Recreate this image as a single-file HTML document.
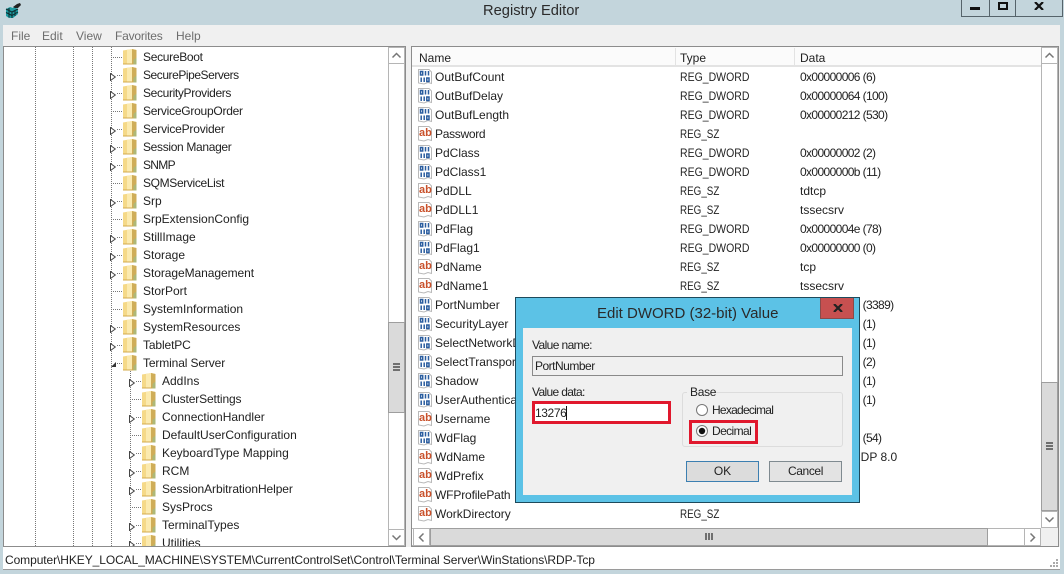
<!DOCTYPE html>
<html><head><meta charset="utf-8"><style>
html,body{margin:0;padding:0;width:1064px;height:574px;overflow:hidden;background:#c3d5dc}
body{position:relative;font:12px "Liberation Sans",sans-serif;color:#222}
.a{position:absolute;box-sizing:border-box}
.t{position:absolute;white-space:nowrap;line-height:16px}
#tree{left:4px;top:47px;width:384px;height:499px;overflow:hidden;background:#fff}
#tree .r{position:absolute;left:0;width:384px;height:18px;white-space:nowrap;line-height:18px}
.v{position:absolute;top:0;width:0;height:499px;border-left:1px dotted #777}
.r svg{position:absolute}
.r span{position:absolute;top:0}
.l1 svg.f{left:119px;top:1px}.l1 span{left:139px}.l1 svg.w{left:106px;top:7px}.l1 i{left:109px}
.l2 svg.f{left:138px;top:1px}.l2 span{left:158px}.l2 svg.w{left:125px;top:7px}.l2 i{left:128px}
.r i{position:absolute;top:9px;width:9px;height:0;border-top:1px dotted #777}
#list{left:412px;top:69px;width:629px;height:459px;overflow:hidden;background:#fff}
#list .r{position:absolute;left:0;width:629px;height:19px;line-height:19px;white-space:nowrap}
#list .r svg{left:5px;top:0}
#list .n{left:23px}#list .y{left:268px;transform:scaleX(.875);transform-origin:0 0}#list .z{left:268px;transform:scaleX(.82);transform-origin:0 0}#list .d{left:388px}#list .h{left:388px;letter-spacing:-.62px}
.sb{background:#fff;border-left:1px solid #b5b5b5;border-right:1px solid #b5b5b5}
.btn{position:absolute;background:#fff;border:1px solid #b5b5b5;box-sizing:border-box}
.thumb{position:absolute;background:#dadada;border:1px solid #9e9e9e;box-sizing:border-box}
.btnd{border:1px solid #7f8a90;text-align:center;line-height:19px}
</style></head><body>
<svg style="display:none"><defs>
<symbol id="fo" viewBox="0 0 14 16"><path d="M0 1.500 L9 0 L13.500 1 V15.500 H0Z" fill="#f5d988"/><path d="M4 1 L9 0 V15.500 H4Z" fill="#fbeaaf"/><path d="M9 0 L13.500 1 V15.500 H9Z" fill="#cfad58"/><path d="M10.500 11 L13.500 8.500 V15.500 H10.500Z" fill="#aeb877"/><path d="M0 14.500H10V15.500H0Z" fill="#d3ab4c"/></symbol>
<symbol id="wt" viewBox="0 0 6 8"><path d="M.5 .5 L5.300 4 L.5 7.500Z" fill="#fff" stroke="#444" stroke-width="1"/></symbol>
<symbol id="dw" viewBox="0 0 16 16"><path d="M1.500 .5H12L14.500 3V14.500L11 13.500L7 15L1.500 14Z" fill="#fff" stroke="#b9b9b9"/><g fill="none" stroke="#2a5d9f" stroke-width="1.500"><rect x="3.500" y="2.500" width="2.200" height="3.500"/><path d="M8.500 2V6.500M11.500 2V6.500"/><path d="M4.200 8.500V13M7.200 8.500V13"/><rect x="9.800" y="9" width="2.200" height="3.500"/></g></symbol>
<symbol id="ab" viewBox="0 0 16 16"><path d="M1.500 .5H12L14.500 3V14.500L11 13.500L7 15L1.500 14Z" fill="#fff" stroke="#b9b9b9"/></symbol>
</defs></svg>

<!-- title bar -->
<svg class="a" style="left:5px;top:3px" width="17" height="16" viewBox="0 0 17 16"><path d="M1 6L5 4L8 5L9 4L13 6V11L8 15H4L1 13Z" fill="#1b9aa0"/><path d="M1 6L7 9V15M7 9L13 6M4 5V14.500M1 9.500L7 12.500M7 12.500L13 9M10 8V13" stroke="#0c2a2c" fill="none" stroke-width="1"/><path d="M8 4L12 1L15 0L16 2L13 5L10 5Z" fill="#222"/></svg>
<div class="t" style="left:483px;top:3px;font-size:14.700px;line-height:17px;color:#2b2b2b">Registry Editor</div>
<div class="a" style="left:961px;top:-1px;width:102px;height:18px;border:1px solid #56646b"></div>
<div class="a" style="left:989px;top:0;width:1px;height:16px;background:#56646b"></div>
<div class="a" style="left:1015px;top:0;width:1px;height:16px;background:#56646b"></div>
<div class="a" style="left:970px;top:7px;width:10px;height:3px;background:#111"></div>
<div class="a" style="left:998px;top:2px;width:10px;height:8px;border:2px solid #111"></div>
<svg class="a" style="left:1034px;top:2px" width="10" height="8" viewBox="0 0 10 8"><path d="M1 0L9 8M9 0L1 8" stroke="#111" stroke-width="2.200"/></svg>

<!-- window body -->
<div class="a" style="left:3px;top:25px;width:1057px;height:545px;background:#f0f0f0"></div>
<div class="t" style="left:11px;top:28px;color:#6d6d6d">File</div>
<div class="t" style="left:42px;top:28px;color:#6d6d6d">Edit</div>
<div class="t" style="left:76px;top:28px;color:#6d6d6d">View</div>
<div class="t" style="left:115px;top:28px;color:#6d6d6d;letter-spacing:-.2px">Favorites</div>
<div class="t" style="left:176px;top:28px;color:#6d6d6d">Help</div>

<!-- tree panel -->
<div class="a" style="left:3px;top:46px;width:403px;height:501px;border:1px solid #8c8c8c;background:#fff"></div>
<div class="a" id="tree">
<div class="v" style="left:31px"></div><div class="v" style="left:69px"></div><div class="v" style="left:88px"></div><div class="v" style="left:107px"></div>
<div class="v" style="left:126px;top:324px;height:175px"></div>
<div class="r l1" style="top:1px"><i></i><svg class="f" width="14" height="16"><use href="#fo"/></svg><span style="letter-spacing:-.3px">SecureBoot</span></div>
<div class="r l1" style="top:19px"><svg class="w" width="6" height="8"><use href="#wt"/></svg><i style="left:113px;width:5px"></i><svg class="f" width="14" height="16"><use href="#fo"/></svg><span style="letter-spacing:-.45px">SecurePipeServers</span></div>
<div class="r l1" style="top:37px"><svg class="w" width="6" height="8"><use href="#wt"/></svg><i style="left:113px;width:5px"></i><svg class="f" width="14" height="16"><use href="#fo"/></svg><span style="letter-spacing:-.35px">SecurityProviders</span></div>
<div class="r l1" style="top:55px"><i></i><svg class="f" width="14" height="16"><use href="#fo"/></svg><span style="letter-spacing:-.25px">ServiceGroupOrder</span></div>
<div class="r l1" style="top:73px"><svg class="w" width="6" height="8"><use href="#wt"/></svg><i style="left:113px;width:5px"></i><svg class="f" width="14" height="16"><use href="#fo"/></svg><span style="letter-spacing:-.2px">ServiceProvider</span></div>
<div class="r l1" style="top:91px"><svg class="w" width="6" height="8"><use href="#wt"/></svg><i style="left:113px;width:5px"></i><svg class="f" width="14" height="16"><use href="#fo"/></svg><span style="letter-spacing:-.33px">Session Manager</span></div>
<div class="r l1" style="top:109px"><svg class="w" width="6" height="8"><use href="#wt"/></svg><i style="left:113px;width:5px"></i><svg class="f" width="14" height="16"><use href="#fo"/></svg><span style="letter-spacing:-.7px">SNMP</span></div>
<div class="r l1" style="top:127px"><i></i><svg class="f" width="14" height="16"><use href="#fo"/></svg><span style="letter-spacing:-.35px">SQMServiceList</span></div>
<div class="r l1" style="top:145px"><svg class="w" width="6" height="8"><use href="#wt"/></svg><i style="left:113px;width:5px"></i><svg class="f" width="14" height="16"><use href="#fo"/></svg><span>Srp</span></div>
<div class="r l1" style="top:163px"><i></i><svg class="f" width="14" height="16"><use href="#fo"/></svg><span>SrpExtensionConfig</span></div>
<div class="r l1" style="top:181px"><svg class="w" width="6" height="8"><use href="#wt"/></svg><i style="left:113px;width:5px"></i><svg class="f" width="14" height="16"><use href="#fo"/></svg><span>StillImage</span></div>
<div class="r l1" style="top:199px"><svg class="w" width="6" height="8"><use href="#wt"/></svg><i style="left:113px;width:5px"></i><svg class="f" width="14" height="16"><use href="#fo"/></svg><span>Storage</span></div>
<div class="r l1" style="top:217px"><svg class="w" width="6" height="8"><use href="#wt"/></svg><i style="left:113px;width:5px"></i><svg class="f" width="14" height="16"><use href="#fo"/></svg><span style="letter-spacing:-.06px">StorageManagement</span></div>
<div class="r l1" style="top:235px"><i></i><svg class="f" width="14" height="16"><use href="#fo"/></svg><span>StorPort</span></div>
<div class="r l1" style="top:253px"><i></i><svg class="f" width="14" height="16"><use href="#fo"/></svg><span>SystemInformation</span></div>
<div class="r l1" style="top:271px"><svg class="w" width="6" height="8"><use href="#wt"/></svg><i style="left:113px;width:5px"></i><svg class="f" width="14" height="16"><use href="#fo"/></svg><span>SystemResources</span></div>
<div class="r l1" style="top:289px"><svg class="w" width="6" height="8"><use href="#wt"/></svg><i style="left:113px;width:5px"></i><svg class="f" width="14" height="16"><use href="#fo"/></svg><span style="letter-spacing:-.12px">TabletPC</span></div>
<div class="r l1" style="top:307px"><svg style="left:106px;top:7px" width="7" height="7" viewBox="0 0 7 7"><path d="M6 1V6H1Z" fill="#333"/></svg><i style="left:113px;width:5px"></i><svg class="f" width="14" height="16"><use href="#fo"/></svg><span style="letter-spacing:-.13px">Terminal Server</span></div>
<div class="r l2" style="top:325px"><svg class="w" width="6" height="8"><use href="#wt"/></svg><i style="left:132px;width:5px"></i><svg class="f" width="14" height="16"><use href="#fo"/></svg><span>AddIns</span></div>
<div class="r l2" style="top:343px"><i></i><svg class="f" width="14" height="16"><use href="#fo"/></svg><span style="letter-spacing:-.13px">ClusterSettings</span></div>
<div class="r l2" style="top:361px"><svg class="w" width="6" height="8"><use href="#wt"/></svg><i style="left:132px;width:5px"></i><svg class="f" width="14" height="16"><use href="#fo"/></svg><span>ConnectionHandler</span></div>
<div class="r l2" style="top:379px"><i></i><svg class="f" width="14" height="16"><use href="#fo"/></svg><span>DefaultUserConfiguration</span></div>
<div class="r l2" style="top:397px"><svg class="w" width="6" height="8"><use href="#wt"/></svg><i style="left:132px;width:5px"></i><svg class="f" width="14" height="16"><use href="#fo"/></svg><span>KeyboardType Mapping</span></div>
<div class="r l2" style="top:415px"><svg class="w" width="6" height="8"><use href="#wt"/></svg><i style="left:132px;width:5px"></i><svg class="f" width="14" height="16"><use href="#fo"/></svg><span>RCM</span></div>
<div class="r l2" style="top:433px"><svg class="w" width="6" height="8"><use href="#wt"/></svg><i style="left:132px;width:5px"></i><svg class="f" width="14" height="16"><use href="#fo"/></svg><span style="letter-spacing:-.08px">SessionArbitrationHelper</span></div>
<div class="r l2" style="top:451px"><i></i><svg class="f" width="14" height="16"><use href="#fo"/></svg><span>SysProcs</span></div>
<div class="r l2" style="top:469px"><svg class="w" width="6" height="8"><use href="#wt"/></svg><i style="left:132px;width:5px"></i><svg class="f" width="14" height="16"><use href="#fo"/></svg><span>TerminalTypes</span></div>
<div class="r l2" style="top:487px"><svg class="w" width="6" height="8"><use href="#wt"/></svg><i style="left:132px;width:5px"></i><svg class="f" width="14" height="16"><use href="#fo"/></svg><span>Utilities</span></div>
</div>
<!-- tree scrollbar -->
<div class="a sb" style="left:388px;top:47px;width:17px;height:499px"></div>
<div class="btn" style="left:388px;top:47px;width:17px;height:17px"></div>
<svg class="a" style="left:391px;top:52px" width="11" height="7"><path d="M1.500 5.500L5.500 1.500L9.500 5.500" stroke="#777" stroke-width="1.500" fill="none"/></svg>
<div class="thumb" style="left:388px;top:322px;width:17px;height:91px"></div>
<div class="a" style="left:393px;top:363px;width:7px;height:2px;background:#6f6f6f"></div><div class="a" style="left:393px;top:366px;width:7px;height:2px;background:#6f6f6f"></div><div class="a" style="left:393px;top:369px;width:7px;height:2px;background:#6f6f6f"></div>
<div class="btn" style="left:388px;top:529px;width:17px;height:17px"></div>
<svg class="a" style="left:391px;top:534px" width="11" height="7"><path d="M1.500 1.500L5.500 5.500L9.500 1.500" stroke="#777" stroke-width="1.500" fill="none"/></svg>

<!-- list panel -->
<div class="a" style="left:411px;top:46px;width:648px;height:501px;border:1px solid #8c8c8c;background:#fff"></div>
<div class="a" style="left:412px;top:47px;width:629px;height:20px;background:#fbfbfb;border-bottom:2px solid #e3e3e3"></div>
<div class="a" style="left:675px;top:48px;width:1px;height:18px;background:#e3e3e3"></div>
<div class="a" style="left:794px;top:48px;width:1px;height:18px;background:#e3e3e3"></div>
<div class="t" style="left:419px;top:50px">Name</div>
<div class="t" style="left:680px;top:50px">Type</div>
<div class="t" style="left:800px;top:50px">Data</div>
<div class="a" id="list">
<div class="r" style="top:0"><svg width="16" height="16"><use href="#dw"/></svg><span class="t n">OutBufCount</span><span class="t y">REG_DWORD</span><span class="t h">0x00000006 (6)</span></div>
<div class="r" style="top:19px"><svg width="16" height="16"><use href="#dw"/></svg><span class="t n">OutBufDelay</span><span class="t y">REG_DWORD</span><span class="t h">0x00000064 (100)</span></div>
<div class="r" style="top:38px"><svg width="16" height="16"><use href="#dw"/></svg><span class="t n">OutBufLength</span><span class="t y">REG_DWORD</span><span class="t h">0x00000212 (530)</span></div>
<div class="r" style="top:57px"><svg width="16" height="16" viewBox="0 0 16 16"><use href="#ab"/><text x="2" y="10" font-family="Liberation Sans" font-size="11" font-weight="bold" fill="#c9512b">ab</text></svg><span class="t n" style="letter-spacing:-.3px">Password</span><span class="t z">REG_SZ</span></div>
<div class="r" style="top:76px"><svg width="16" height="16"><use href="#dw"/></svg><span class="t n">PdClass</span><span class="t y">REG_DWORD</span><span class="t h">0x00000002 (2)</span></div>
<div class="r" style="top:95px"><svg width="16" height="16"><use href="#dw"/></svg><span class="t n">PdClass1</span><span class="t y">REG_DWORD</span><span class="t h">0x0000000b (11)</span></div>
<div class="r" style="top:114px"><svg width="16" height="16" viewBox="0 0 16 16"><use href="#ab"/><text x="2" y="10" font-family="Liberation Sans" font-size="11" font-weight="bold" fill="#c9512b">ab</text></svg><span class="t n">PdDLL</span><span class="t z">REG_SZ</span><span class="t d">tdtcp</span></div>
<div class="r" style="top:133px"><svg width="16" height="16" viewBox="0 0 16 16"><use href="#ab"/><text x="2" y="10" font-family="Liberation Sans" font-size="11" font-weight="bold" fill="#c9512b">ab</text></svg><span class="t n">PdDLL1</span><span class="t z">REG_SZ</span><span class="t d">tssecsrv</span></div>
<div class="r" style="top:152px"><svg width="16" height="16"><use href="#dw"/></svg><span class="t n">PdFlag</span><span class="t y">REG_DWORD</span><span class="t h">0x0000004e (78)</span></div>
<div class="r" style="top:171px"><svg width="16" height="16"><use href="#dw"/></svg><span class="t n">PdFlag1</span><span class="t y">REG_DWORD</span><span class="t h">0x00000000 (0)</span></div>
<div class="r" style="top:190px"><svg width="16" height="16" viewBox="0 0 16 16"><use href="#ab"/><text x="2" y="10" font-family="Liberation Sans" font-size="11" font-weight="bold" fill="#c9512b">ab</text></svg><span class="t n">PdName</span><span class="t z">REG_SZ</span><span class="t d">tcp</span></div>
<div class="r" style="top:209px"><svg width="16" height="16" viewBox="0 0 16 16"><use href="#ab"/><text x="2" y="10" font-family="Liberation Sans" font-size="11" font-weight="bold" fill="#c9512b">ab</text></svg><span class="t n">PdName1</span><span class="t z">REG_SZ</span><span class="t d">tssecsrv</span></div>
<div class="r" style="top:228px"><svg width="16" height="16"><use href="#dw"/></svg><span class="t n">PortNumber</span><span class="t y">REG_DWORD</span><span class="t h">0x00000d3d (3389)</span></div>
<div class="r" style="top:247px"><svg width="16" height="16"><use href="#dw"/></svg><span class="t n">SecurityLayer</span><span class="t y">REG_DWORD</span><span class="t h">0x00000001 (1)</span></div>
<div class="r" style="top:266px"><svg width="16" height="16"><use href="#dw"/></svg><span class="t n">SelectNetworkDetect</span><span class="t y">REG_DWORD</span><span class="t h">0x00000001 (1)</span></div>
<div class="r" style="top:285px"><svg width="16" height="16"><use href="#dw"/></svg><span class="t n">SelectTransport</span><span class="t y">REG_DWORD</span><span class="t h">0x00000002 (2)</span></div>
<div class="r" style="top:304px"><svg width="16" height="16"><use href="#dw"/></svg><span class="t n">Shadow</span><span class="t y">REG_DWORD</span><span class="t h">0x00000001 (1)</span></div>
<div class="r" style="top:323px"><svg width="16" height="16"><use href="#dw"/></svg><span class="t n">UserAuthentication</span><span class="t y">REG_DWORD</span><span class="t h">0x00000001 (1)</span></div>
<div class="r" style="top:342px"><svg width="16" height="16" viewBox="0 0 16 16"><use href="#ab"/><text x="2" y="10" font-family="Liberation Sans" font-size="11" font-weight="bold" fill="#c9512b">ab</text></svg><span class="t n">Username</span><span class="t z">REG_SZ</span></div>
<div class="r" style="top:361px"><svg width="16" height="16"><use href="#dw"/></svg><span class="t n">WdFlag</span><span class="t y">REG_DWORD</span><span class="t h">0x00000036 (54)</span></div>
<div class="r" style="top:380px"><svg width="16" height="16" viewBox="0 0 16 16"><use href="#ab"/><text x="2" y="10" font-family="Liberation Sans" font-size="11" font-weight="bold" fill="#c9512b">ab</text></svg><span class="t n">WdName</span><span class="t z">REG_SZ</span><span class="t d">Microsoft RDP 8.0</span></div>
<div class="r" style="top:399px"><svg width="16" height="16" viewBox="0 0 16 16"><use href="#ab"/><text x="2" y="10" font-family="Liberation Sans" font-size="11" font-weight="bold" fill="#c9512b">ab</text></svg><span class="t n">WdPrefix</span><span class="t z">REG_SZ</span></div>
<div class="r" style="top:418px"><svg width="16" height="16" viewBox="0 0 16 16"><use href="#ab"/><text x="2" y="10" font-family="Liberation Sans" font-size="11" font-weight="bold" fill="#c9512b">ab</text></svg><span class="t n" style="letter-spacing:-.15px">WFProfilePath</span><span class="t z">REG_SZ</span></div>
<div class="r" style="top:437px"><svg width="16" height="16" viewBox="0 0 16 16"><use href="#ab"/><text x="2" y="10" font-family="Liberation Sans" font-size="11" font-weight="bold" fill="#c9512b">ab</text></svg><span class="t n">WorkDirectory</span><span class="t z">REG_SZ</span></div>
</div>
<!-- list v scrollbar -->
<div class="a sb" style="left:1041px;top:47px;width:17px;height:481px"></div>
<div class="btn" style="left:1041px;top:47px;width:17px;height:17px"></div>
<svg class="a" style="left:1044px;top:52px" width="11" height="7"><path d="M1.500 5.500L5.500 1.500L9.500 5.500" stroke="#777" stroke-width="1.500" fill="none"/></svg>
<div class="thumb" style="left:1041px;top:382px;width:17px;height:129px"></div>
<div class="a" style="left:1046px;top:442px;width:7px;height:2px;background:#6f6f6f"></div><div class="a" style="left:1046px;top:445px;width:7px;height:2px;background:#6f6f6f"></div><div class="a" style="left:1046px;top:448px;width:7px;height:2px;background:#6f6f6f"></div>
<div class="btn" style="left:1041px;top:511px;width:17px;height:17px"></div>
<svg class="a" style="left:1044px;top:516px" width="11" height="7"><path d="M1.500 1.500L5.500 5.500L9.500 1.500" stroke="#777" stroke-width="1.500" fill="none"/></svg>
<!-- list h scrollbar -->
<div class="a" style="left:412px;top:528px;width:629px;height:18px;background:#fff;border-top:1px solid #b5b5b5;border-bottom:1px solid #b5b5b5"></div>
<div class="btn" style="left:413px;top:528px;width:17px;height:18px"></div>
<svg class="a" style="left:418px;top:532px" width="7" height="11"><path d="M5.500 1.500L1.500 5.500L5.500 9.500" stroke="#777" stroke-width="1.500" fill="none"/></svg>
<div class="thumb" style="left:430px;top:528px;width:558px;height:18px"></div>
<div class="a" style="left:705px;top:533px;width:2px;height:7px;background:#6f6f6f"></div><div class="a" style="left:708px;top:533px;width:2px;height:7px;background:#6f6f6f"></div><div class="a" style="left:711px;top:533px;width:2px;height:7px;background:#6f6f6f"></div>
<div class="btn" style="left:1024px;top:528px;width:17px;height:18px"></div>
<svg class="a" style="left:1029px;top:532px" width="7" height="11"><path d="M1.500 1.500L5.500 5.500L1.500 9.500" stroke="#777" stroke-width="1.500" fill="none"/></svg>
<div class="a" style="left:1041px;top:528px;width:17px;height:18px;background:#f0f0f0"></div>

<!-- status bar -->
<div class="a" style="left:3px;top:547px;width:1057px;height:23px;background:#fff;border-bottom:1px solid #9a9a9a"></div>
<div class="t" style="left:5px;top:552px;letter-spacing:-.08px">Computer\HKEY_LOCAL_MACHINE\SYSTEM\CurrentControlSet\Control\Terminal Server\WinStations\RDP-Tcp</div>
<svg class="a" style="left:1050px;top:559px" width="9" height="9"><g fill="#aaa"><rect x="6" y="0" width="2" height="2"/><rect x="3" y="3" width="2" height="2"/><rect x="6" y="3" width="2" height="2"/><rect x="0" y="6" width="2" height="2"/><rect x="3" y="6" width="2" height="2"/><rect x="6" y="6" width="2" height="2"/></g></svg>

<!-- dialog -->
<div class="a" style="left:515px;top:297px;width:345px;height:206px;background:#5cc2e6;border:1px solid #1d4a5c"></div>
<div class="a" style="left:523px;top:328px;width:329px;height:167px;background:#f0f0f0"></div>
<div class="a" style="left:820px;top:298px;width:34px;height:21px;background:#c75050;border:1px solid #8a4a4a;border-top:0"></div>
<svg class="a" style="left:833px;top:304px" width="10" height="8" viewBox="0 0 10 8"><path d="M1 0L9 8M9 0L1 8" stroke="#222" stroke-width="2.200"/></svg>
<div class="t" style="left:597px;top:305px;font-size:15px;line-height:18px;color:#2a2a2a">Edit DWORD (32-bit) Value</div>
<div class="t" style="left:532px;top:337px;letter-spacing:-.6px">Value name:</div>
<div class="a" style="left:532px;top:356px;width:311px;height:20px;background:#f0f0f0;border:1px solid #8a8a8a"></div>
<div class="t" style="left:535px;top:358px;letter-spacing:-.5px">PortNumber</div>
<div class="t" style="left:532px;top:384px;letter-spacing:-.65px">Value data:</div>
<div class="a" style="left:532px;top:401px;width:139px;height:23px;background:#fff;border:3px solid #e0182d"></div>
<div class="t" style="left:535px;top:405px;letter-spacing:-.4px">13276</div>
<div class="a" style="left:566px;top:406px;width:1px;height:14px;background:#111"></div>
<div class="a" style="left:682px;top:392px;width:161px;height:55px;border:1px solid #dcdcdc;border-radius:3px"></div>
<div class="a" style="left:687px;top:386px;width:29px;height:14px;background:#f0f0f0"></div>
<div class="t" style="left:690px;top:384px;letter-spacing:-.3px">Base</div>
<svg class="a" style="left:695px;top:403px" width="14" height="14"><circle cx="7" cy="7" r="5.500" fill="#fff" stroke="#777"/></svg>
<div class="t" style="left:712px;top:402px;letter-spacing:-.75px">Hexadecimal</div>
<div class="a" style="left:689px;top:420px;width:69px;height:24px;border:3px solid #e0182d"></div>
<svg class="a" style="left:695px;top:424px" width="14" height="14"><circle cx="7" cy="7" r="5.500" fill="#fff" stroke="#777"/><circle cx="7" cy="7" r="3.200" fill="#111"/></svg>
<div class="t" style="left:712px;top:423px;letter-spacing:-.6px">Decimal</div>
<div class="a btnd" style="left:686px;top:461px;width:73px;height:21px;background:#dcdcdc;border-color:#3c7fb1">OK</div>
<div class="a btnd" style="left:769px;top:461px;width:73px;height:21px;background:#e3e3e3;letter-spacing:-.4px">Cancel</div>
</body></html>
